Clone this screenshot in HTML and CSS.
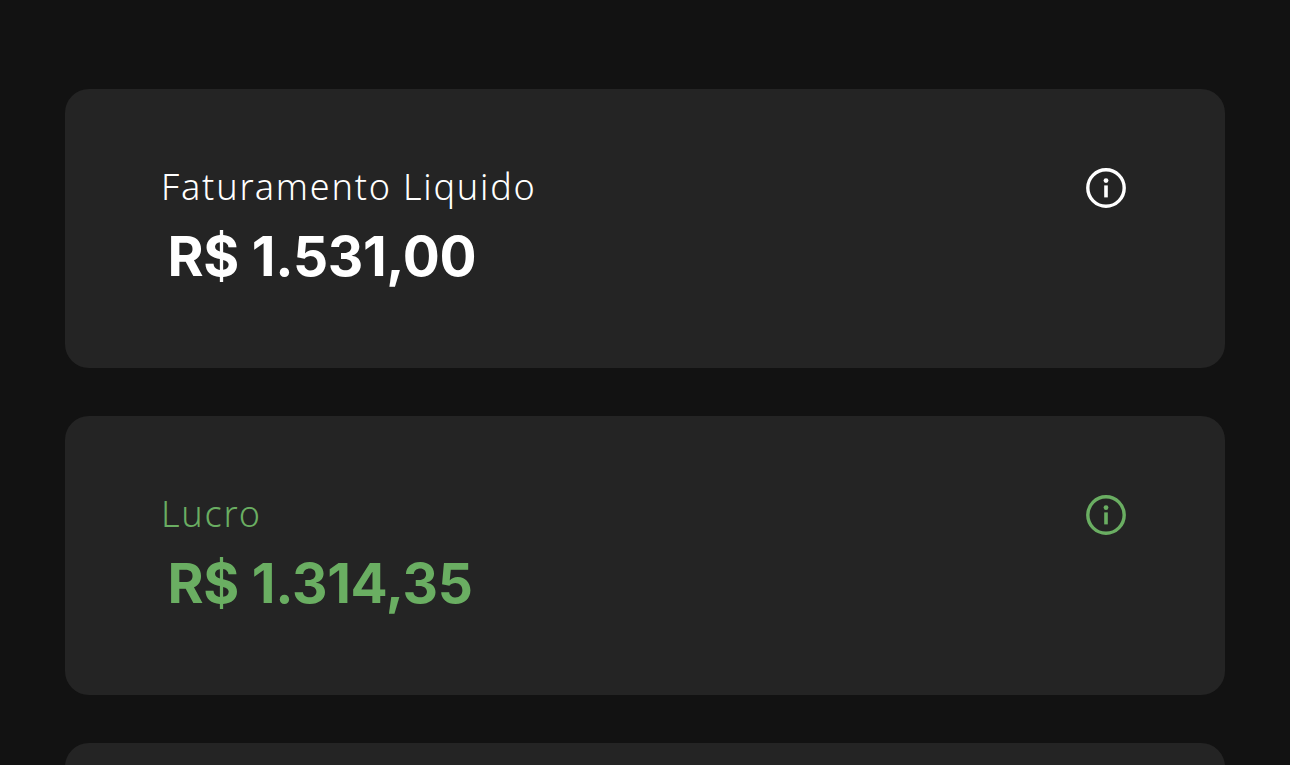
FILE: index.html
```html
<!DOCTYPE html>
<html lang="pt-BR">
<head>
    <meta charset="UTF-8">
    <meta name="viewport" content="width=device-width, initial-scale=1.0">
    <title>Resumo financeiro</title>
    <link rel="stylesheet" href="styles.css">
</head>
<body>
    <div class="list">
      <div class="card">
        <div class="top">
          <p class="label">Faturamento Liquido</p>
          <svg class="info" viewBox="0 0 40 40" width="40" height="40">
            <circle cx="20" cy="20" r="18.2" fill="none" stroke="currentColor" stroke-width="3.4"/>
            <circle cx="20" cy="12.6" r="2.4" fill="currentColor"/>
            <rect x="18.2" y="17.4" width="3.6" height="12" fill="currentColor"/>
          </svg>
        </div>
        <p class="value">R$ 1.531,00</p>
      </div>

      <div class="card green">
        <div class="top">
          <p class="label">Lucro</p>
          <svg class="info" viewBox="0 0 40 40" width="40" height="40">
            <circle cx="20" cy="20" r="18.2" fill="none" stroke="currentColor" stroke-width="3.4"/>
            <circle cx="20" cy="12.6" r="2.4" fill="currentColor"/>
            <rect x="18.2" y="17.4" width="3.6" height="12" fill="currentColor"/>
          </svg>
        </div>
        <p class="value">R$ 1.314,35</p>
      </div>

      <div class="card"></div>
    </div>
</body>
</html>
```

FILE: styles.css
```css
html, body {
  height: 100%;
}
body {
  margin: 0;
  background-color: #121212;
  overflow: hidden;
  font-family: "Inter", "Noto Sans", sans-serif;
  color: #fff;
}
.list {
  display: flex;
  flex-direction: column;
  gap: 48px;
  height: 100%;
  box-sizing: border-box;
  padding: 89px 65px 0;
}
.card {
  height: 279px;
  flex-shrink: 0;
  box-sizing: border-box;
  padding: 79px 99.5px 0 96px;
  background-color: #242424;
  border-radius: 24px;
}
.top {
  display: flex;
  justify-content: space-between;
  align-items: center;
  height: 40px;
}
.label {
  margin: -3px 0 0;
  font-family: "Noto Sans", sans-serif;
  font-size: 36px;
  font-weight: 300;
  letter-spacing: 1.8px;
}
.value {
  margin: 14px 0 0 6.5px;
  font-size: 55px;
  font-weight: 700;
  line-height: 68px;
  letter-spacing: -0.3px;
}
.info {
  display: block;
}
.green {
  color: #6aae62;
}
```
